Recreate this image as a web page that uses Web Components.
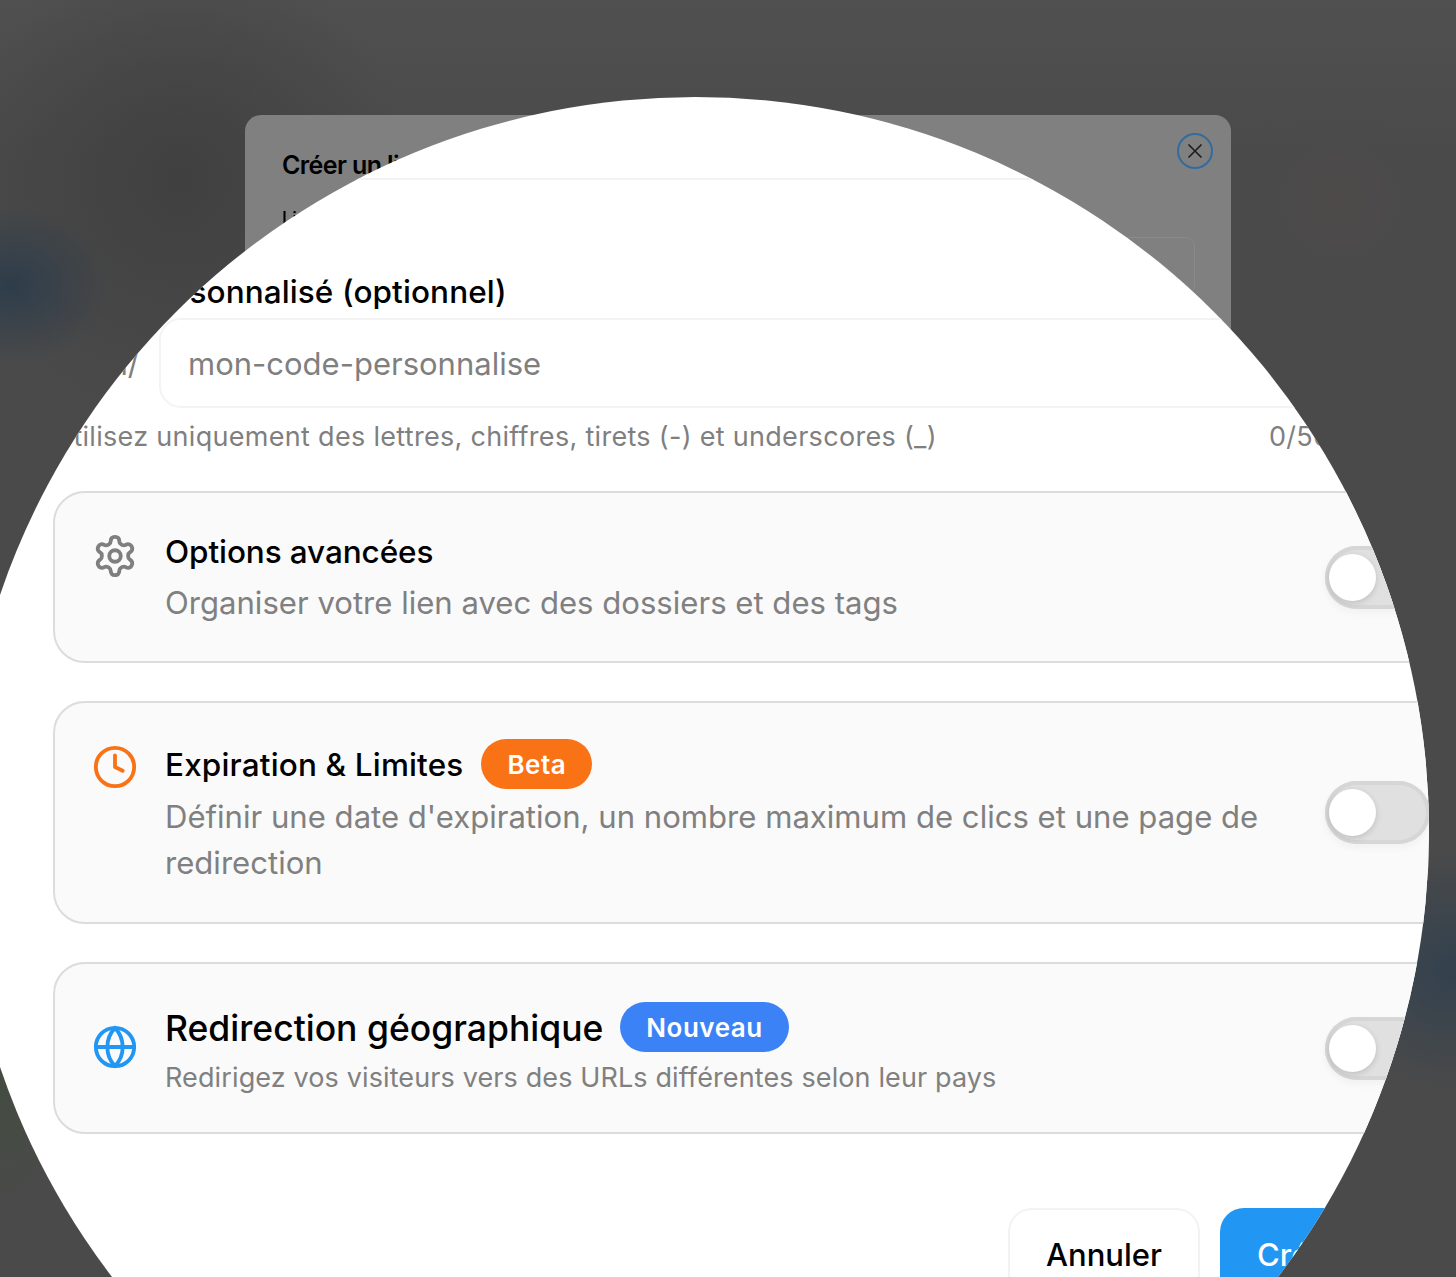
<!DOCTYPE html>
<html lang="fr">
<head>
<meta charset="utf-8">
<title>Créer un lien</title>
<style>
html,body {margin:0;height:100%;overflow:hidden;background:#4a4a4a;}
body {font-family:Inter,"Liberation Sans",sans-serif;}
</style>
</head>
<body>
<zoom-scene>
    <behind-dialog></behind-dialog>
    <magnifier-lens>
        <form-label>Code personnalisé (optionnel)</form-label>
        <slug-field prefix=".com/" placeholder="mon-code-personnalise"></slug-field>
        <help-row count="0/50">Utilisez uniquement des lettres, chiffres, tirets (-) et underscores (_)</help-row>
        <option-card icon="gear" colour="#7f7f7f" height="172" pad="34" gap="3" icon-top="6">
            <span slot="title" style="letter-spacing:-.1px">Options avancées</span>
            Organiser votre lien avec des dossiers et des tags
        </option-card>
        <option-card icon="clock" colour="#f97316" height="223" pad="37" gap="4" icon-top="4">
            <span slot="title" style="letter-spacing:.15px">Expiration &amp; Limites</span>
            <status-badge slot="badge" colour="#f97316" style="margin-top:-2px">Beta</status-badge>
            Définir une date d'expiration, un nombre maximum de clics et une page de redirection
        </option-card>
        <option-card icon="globe" colour="#2196f3" height="172" pad="40" gap="7" icon-top="20" size="large">
            <span slot="title">Redirection géographique</span>
            <status-badge slot="badge" colour="#3b82f6" style="margin:-4px 0 0 -1px">Nouveau</status-badge>
            Redirigez vos visiteurs vers des URLs différentes selon leur pays
        </option-card>
        <form-actions></form-actions>
    </magnifier-lens>
</zoom-scene>
<script>
const ICONS = {
    gear: `<path d="M12.22 2h-.44a2 2 0 0 0-2 2v.18a2 2 0 0 1-1 1.73l-.43.25a2 2 0 0 1-2 0l-.15-.08a2 2 0 0 0-2.73.73l-.22.38a2 2 0 0 0 .73 2.73l.15.1a2 2 0 0 1 1 1.72v.51a2 2 0 0 1-1 1.74l-.15.09a2 2 0 0 0-.73 2.73l.22.38a2 2 0 0 0 2.73.73l.15-.08a2 2 0 0 1 2 0l.43.25a2 2 0 0 1 1 1.73V20a2 2 0 0 0 2 2h.44a2 2 0 0 0 2-2v-.18a2 2 0 0 1 1-1.73l.43-.25a2 2 0 0 1 2 0l.15.08a2 2 0 0 0 2.73-.73l.22-.39a2 2 0 0 0-.73-2.73l-.15-.08a2 2 0 0 1-1-1.74v-.5a2 2 0 0 1 1-1.74l.15-.09a2 2 0 0 0 .73-2.73l-.22-.38a2 2 0 0 0-2.73-.73l-.15.08a2 2 0 0 1-2 0l-.43-.25a2 2 0 0 1-1-1.73V4a2 2 0 0 0-2-2z"/><circle cx="12" cy="12" r="3"/>`,
    clock: `<circle cx="12" cy="12" r="10"/><polyline points="12 6 12 12 16 14"/>`,
    globe: `<circle cx="12" cy="12" r="10"/><path d="M12 2a14.5 14.5 0 0 0 0 20 14.5 14.5 0 0 0 0-20"/><path d="M2 12h20"/>`
};
customElements.define('zoom-scene', class extends HTMLElement {
    constructor() {
        super();
        this.attachShadow({ mode: 'open' }).innerHTML = `
        <style>
        :host {
            display:block;position:relative;overflow:hidden;
            width:1456px;height:1277px;
            background:
                radial-gradient(closest-side,#2e3d4b,#2e3d4b00) -90px 205px/200px 160px no-repeat,
                radial-gradient(closest-side,#404040,#40404000) -50px -60px/460px 480px no-repeat,
                radial-gradient(closest-side,#33414e,#33414e00) 1330px 850px/240px 240px no-repeat,
                radial-gradient(closest-side,#444c41,#444c4100) -70px 970px/140px 240px no-repeat,
                radial-gradient(closest-side,#4e4a4a,#4e4a4a00) 1250px 110px/180px 180px no-repeat,
                linear-gradient(#505050,#4a4a4a 12%,#4a4a4a);
        }
        </style>
        <slot></slot>`;
    }
});
customElements.define('behind-dialog', class extends HTMLElement {
    constructor() {
        super();
        this.attachShadow({ mode: 'open' }).innerHTML = `
        <style>
        :host {
            display:flex;flex-direction:column;box-sizing:border-box;
            position:absolute;left:245px;top:115px;width:986px;height:1300px;
            padding:36px 36px 0 37px;
            background:#808080;border-radius:16px;
            color:#000;
        }
        h2 {margin:0;font:600 25px/28px Inter,"Liberation Sans",sans-serif;letter-spacing:-.6px;height:56px;}
        label {font:500 18px/24px Inter,"Liberation Sans",sans-serif;}
        .box {margin-top:6px;height:56px;border:1px solid #8a8a8a;border-radius:10px;}
        button {
            position:absolute;right:18px;top:18px;
            width:36px;height:36px;padding:0;
            display:flex;align-items:center;justify-content:center;
            background:none;border:2.5px solid #336b9f;border-radius:50%;box-sizing:border-box;
        }
        </style>
        <h2>Créer un lien</h2>
        <label>Lien de destination</label>
        <div class="box"></div>
        <button aria-label="Fermer"><svg width="16" height="16" viewBox="0 0 16 16" fill="none" stroke="#1c1c1c" stroke-width="1.6"><path d="M1.5 1.5l13 13M14.5 1.5l-13 13"/></svg></button>`;
    }
});
customElements.define('magnifier-lens', class extends HTMLElement {
    constructor() {
        super();
        this.attachShadow({ mode: 'open' }).innerHTML = `
        <style>
        :host {
            display:block;box-sizing:border-box;
            position:absolute;left:-39px;top:97px;width:1468px;height:1468px;
            border-radius:50%;overflow:hidden;
            background:#fff;
            padding:81px 0 0 92px;
        }
        .rule {width:1407px;height:2px;background:#f3f3f3;margin-bottom:94px;}
        .col {width:1407px;}
        </style>
        <div class="rule"></div>
        <div class="col"><slot></slot></div>`;
    }
});
customElements.define('form-label', class extends HTMLElement {
    constructor() {
        super();
        this.attachShadow({ mode: 'open' }).innerHTML = `
        <style>
        :host {display:block;height:44px;margin-left:-3px;font:500 31.5px/36px Inter,"Liberation Sans",sans-serif;letter-spacing:.1px;color:#000;white-space:nowrap;}
        </style>
        <slot></slot>`;
    }
});
customElements.define('slug-field', class extends HTMLElement {
    constructor() {
        super();
        this.attachShadow({ mode: 'open' }).innerHTML = `
        <style>
        :host {display:flex;align-items:center;gap:20px;height:90px;}
        .prefix {width:86px;text-align:right;font:400 31px Inter,"Liberation Sans",sans-serif;color:#7f7f7f;}
        .box {
            flex:1;height:90px;box-sizing:border-box;
            display:flex;align-items:center;padding:0 27px;
            border:2px solid #f3f3f3;border-radius:22px;
            font:400 31px Inter,"Liberation Sans",sans-serif;color:#7f7f7f;
        }
        </style>
        <span class="prefix"></span>
        <div class="box"></div>`;
    }
    connectedCallback() {
        this.shadowRoot.querySelector('.prefix').textContent = this.getAttribute('prefix');
        this.shadowRoot.querySelector('.box').textContent = this.getAttribute('placeholder');
    }
});
customElements.define('help-row', class extends HTMLElement {
    constructor() {
        super();
        this.attachShadow({ mode: 'open' }).innerHTML = `
        <style>
        :host {
            display:flex;height:83px;padding-top:12px;box-sizing:border-box;
            font:400 27px/34px Inter,"Liberation Sans",sans-serif;letter-spacing:.3px;color:#7f7f7f;white-space:nowrap;
        }
        .count {position:absolute;left:1308px;}
        </style>
        <slot></slot><span class="count"></span>`;
    }
    connectedCallback() {
        this.shadowRoot.querySelector('.count').textContent = this.getAttribute('count');
    }
});
customElements.define('status-badge', class extends HTMLElement {
    constructor() {
        super();
        this.attachShadow({ mode: 'open' }).innerHTML = `
        <style>
        :host {
            display:inline-flex;align-items:center;height:50px;padding:0 26px;
            border-radius:25px;color:#fff;
            font:600 26px Inter,"Liberation Sans",sans-serif;letter-spacing:.5px;
        }
        </style>
        <slot></slot>`;
    }
    connectedCallback() {
        this.style.background = this.getAttribute('colour');
    }
});
customElements.define('toggle-switch', class extends HTMLElement {
    constructor() {
        super();
        this.attachShadow({ mode: 'open' }).innerHTML = `
        <style>
        :host {
            display:block;box-sizing:border-box;flex:none;
            width:105px;height:63px;padding:4px;
            background:#e0e0e0;border-radius:32px;
            box-shadow:inset 0 0 0 4px #d6d6d6,0 4px 8px #0000000a;
        }
        i {
            display:block;width:47px;height:47px;margin-top:4px;
            background:#fff;border-radius:50%;
            box-shadow:0 2px 6px #00000026;
        }
        </style>
        <i></i>`;
    }
});
customElements.define('option-card', class extends HTMLElement {
    constructor() {
        super();
        this.attachShadow({ mode: 'open' }).innerHTML = `
        <style>
        :host {
            display:flex;box-sizing:border-box;
            margin-bottom:38px;
            background:#fafafa;border:2px solid #dcdcdc;border-radius:32px;
        }
        :host([size=large]) .title {font-size:35.5px;}
        :host([size=large]) .desc {font-size:27px;line-height:34px;letter-spacing:.12px;}
        .main {flex:1;display:flex;align-items:flex-start;padding:var(--pad) 0 0 36.5px;}
        svg {flex:none;width:46px;height:46px;margin:var(--icon-top) 27.5px 0 0;fill:none;stroke-width:2;stroke-linecap:round;stroke-linejoin:round;}
        .text {flex:1;}
        .head {display:flex;align-items:center;gap:18px;}
        .title {font:500 31.5px/50px Inter,"Liberation Sans",sans-serif;color:#000;}
        .desc {font:400 31.1px/46px Inter,"Liberation Sans",sans-serif;color:#808080;width:1110px;margin-top:var(--gap);}
        toggle-switch {align-self:center;margin:0 28px 0 40px;}
        </style>
        <div class="main">
            <svg viewBox="0 0 24 24"></svg>
            <div class="text">
                <div class="head"><div class="title"><slot name="title"></slot></div><slot name="badge"></slot></div>
                <div class="desc"><slot></slot></div>
            </div>
        </div>
        <toggle-switch></toggle-switch>`;
    }
    connectedCallback() {
        const svg = this.shadowRoot.querySelector('svg');
        svg.innerHTML = ICONS[this.getAttribute('icon')];
        svg.style.stroke = this.getAttribute('colour');
        this.style.height = this.getAttribute('height') + 'px';
        ['pad', 'gap', 'icon-top'].forEach(attr => this.style.setProperty(`--${attr}`, this.getAttribute(attr) + 'px'));
    }
});
customElements.define('form-actions', class extends HTMLElement {
    constructor() {
        super();
        this.attachShadow({ mode: 'open' }).innerHTML = `
        <style>
        :host {display:flex;gap:20px;margin-top:74px;padding-left:955px;}
        button {
            height:92px;border-radius:24px;padding:0;
            font:500 31px Inter,"Liberation Sans",sans-serif;
        }
        .cancel {width:192px;background:#fff;border:2px solid #f3f3f3;color:#000;}
        .create {width:230px;background:#2196f3;border:0;color:#fff;text-align:left;padding-left:37px;}
        </style>
        <button class="cancel">Annuler</button>
        <button class="create">Créer</button>`;
    }
});
</script>
</body>
</html>
